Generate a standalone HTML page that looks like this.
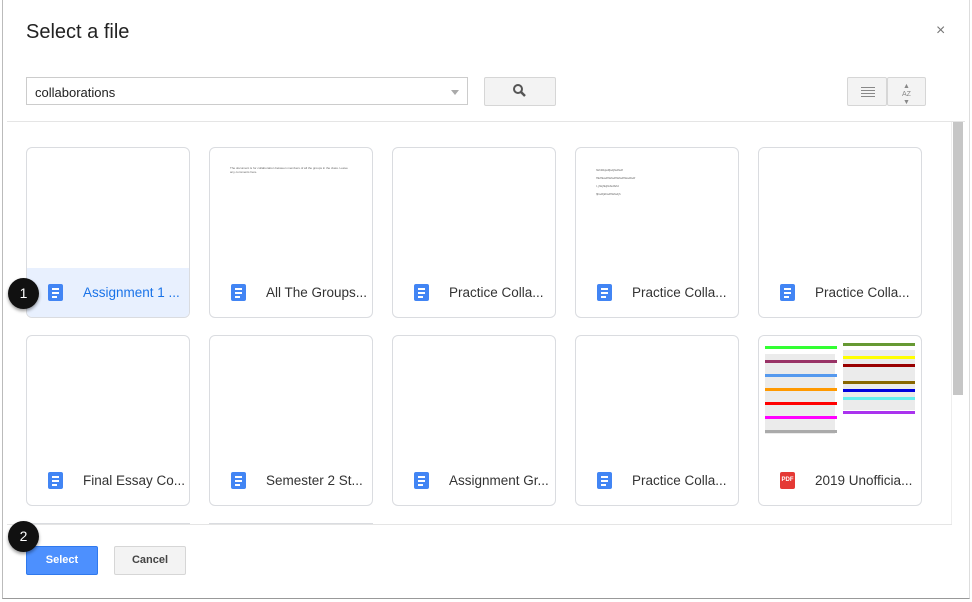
<!DOCTYPE html>
<html style="overflow:hidden;height:602px"><head><style>
body{margin:0;width:972px;height:602px;background:#fff;font-family:"Liberation Sans",Arial,sans-serif;position:relative;overflow:hidden}
.frame{position:absolute;left:2px;top:0;width:968px;height:599px;border-left:1px solid #bbb;border-bottom:1px solid #999;border-right:1px solid #ddd;box-sizing:border-box}
h1{position:absolute;left:26px;top:21px;margin:0;font-size:20px;font-weight:normal;color:#222}
.x{position:absolute;left:936px;top:22px;font-size:16px;color:#777}
.search{position:absolute;left:26px;top:77px;width:442px;height:28px;border:1px solid #ccc;box-sizing:border-box;font-size:13px;padding:7px 8px;color:#222}
.search:after{content:"";position:absolute;right:8px;top:12px;border:4px solid transparent;border-top:5px solid #aaa}
.btn{position:absolute;background:#f3f3f3;border:1px solid #d6d6d6;box-sizing:border-box;border-radius:2px}
.hr{position:absolute;left:7px;top:121px;width:958px;height:1px;background:#e5e5e5}
.sb{position:absolute;left:953px;top:122px;width:10px;height:273px;background:#c6c6c6}
.sbt{position:absolute;left:951px;top:122px;width:1px;height:403px;background:#eee}
.card{position:absolute;width:164px;height:171px;border:1px solid #dadce0;border-radius:6px;box-sizing:border-box;overflow:hidden;background:#fff}
.lab{position:absolute;left:0;right:0;bottom:0;height:49px}
.lab .ic{position:absolute;left:21px;top:16px;width:15px;height:17px;background:#4285f4;border-radius:2px}
.lab .ic i{position:absolute;left:4px;height:2px;background:#fff}
.lab span{position:absolute;left:56px;top:17px;font-size:13.5px;color:#333;white-space:nowrap}
.sel .lab{background:#e8f0fe}.sel .lab span{color:#1a73e8}
.pdf{background:#e53935!important;font-size:6px;color:#fff;font-weight:bold;text-align:center;line-height:17px}
.foot{position:absolute;left:7px;top:524px;width:945px;height:1px;background:#e5e5e5}
.badge{position:absolute;width:31px;height:31px;border-radius:50%;background:#111;color:#fff;font-size:14px;text-align:center;line-height:31px;box-shadow:0 2px 3px rgba(0,0,0,.4)}
.tiny{position:absolute;left:20px;font-size:3px;color:#666;width:120px}
</style></head><body>
<div class="frame"></div>
<h1>Select a file</h1>
<div class="x">×</div>
<div class="search">collaborations</div>
<div class="btn" style="left:484px;top:77px;width:72px;height:29px">
<svg width="72" height="29" style="position:absolute;left:-1px;top:-1px"><circle cx="34" cy="12" r="4" fill="none" stroke="#555" stroke-width="2"/><line x1="37" y1="15" x2="41" y2="19" stroke="#555" stroke-width="2.5"/></svg></div>
<div class="btn" style="left:847px;top:77px;width:40px;height:29px">
<svg width="40" height="29" style="position:absolute;left:0;top:0"><g stroke="#888" stroke-width="1"><line x1="13" y1="9.5" x2="27" y2="9.5"/><line x1="13" y1="12.5" x2="27" y2="12.5"/><line x1="13" y1="15.5" x2="27" y2="15.5"/><line x1="13" y1="18.5" x2="27" y2="18.5"/></g></svg></div>
<div class="btn" style="left:887px;top:77px;width:39px;height:29px;font-size:7px;color:#888;text-align:center;line-height:8px;padding-top:5px">▲<br>AZ<br>▼</div>
<div class="hr"></div>
<div class="sbt"></div><div class="sb"></div>

<div class="card sel" style="left:26px;top:147px"><div class="lab"><div class="ic"><i style="top:4px;width:7px"></i><i style="top:8px;width:7px"></i><i style="top:12px;width:5px"></i></div><span>Assignment 1 ...</span></div></div>
<div class="card" style="left:209px;top:147px"><div class="tiny" style="top:18px">The document is for collaboration between members of all the groups in the class. Leave any comments here.</div><div class="lab"><div class="ic"><i style="top:4px;width:7px"></i><i style="top:8px;width:7px"></i><i style="top:12px;width:5px"></i></div><span>All The Groups...</span></div></div>
<div class="card" style="left:392px;top:147px"><div class="lab"><div class="ic"><i style="top:4px;width:7px"></i><i style="top:8px;width:7px"></i><i style="top:12px;width:5px"></i></div><span>Practice Colla...</span></div></div>
<div class="card" style="left:575px;top:147px"><div class="tiny" style="top:18px;line-height:8px">hkhfdkjsdfjsdjfsdfsdf<br>fhkfhksdfhkfsdfhkfsdfhksdfsdf<br>l,.jhkjhkjhkfsdfsfd<br>fjhsdfjkhsdfhkfsdjh</div><div class="lab"><div class="ic"><i style="top:4px;width:7px"></i><i style="top:8px;width:7px"></i><i style="top:12px;width:5px"></i></div><span>Practice Colla...</span></div></div>
<div class="card" style="left:758px;top:147px"><div class="lab"><div class="ic"><i style="top:4px;width:7px"></i><i style="top:8px;width:7px"></i><i style="top:12px;width:5px"></i></div><span>Practice Colla...</span></div></div>

<div class="card" style="left:26px;top:335px"><div class="lab"><div class="ic"><i style="top:4px;width:7px"></i><i style="top:8px;width:7px"></i><i style="top:12px;width:5px"></i></div><span>Final Essay Co...</span></div></div>
<div class="card" style="left:209px;top:335px"><div class="lab"><div class="ic"><i style="top:4px;width:7px"></i><i style="top:8px;width:7px"></i><i style="top:12px;width:5px"></i></div><span>Semester 2 St...</span></div></div>
<div class="card" style="left:392px;top:335px"><div class="lab"><div class="ic"><i style="top:4px;width:7px"></i><i style="top:8px;width:7px"></i><i style="top:12px;width:5px"></i></div><span>Assignment Gr...</span></div></div>
<div class="card" style="left:575px;top:335px"><div class="lab"><div class="ic"><i style="top:4px;width:7px"></i><i style="top:8px;width:7px"></i><i style="top:12px;width:5px"></i></div><span>Practice Colla...</span></div></div>
<div class="card" style="left:758px;top:335px">
<svg width="164" height="110" style="position:absolute;left:0;top:0">
<g fill="#ddd"><rect x="6" y="18" width="70" height="80" opacity=".6"/><rect x="84" y="14" width="72" height="60" opacity=".6"/></g>
<g height="3"><rect x="6" y="10" width="72" height="3" fill="#3f3"/><rect x="6" y="24" width="72" height="3" fill="#936"/><rect x="6" y="38" width="72" height="3" fill="#59e"/><rect x="6" y="52" width="72" height="3" fill="#f90"/><rect x="6" y="66" width="72" height="3" fill="#f00"/><rect x="6" y="80" width="72" height="3" fill="#f0f"/><rect x="6" y="94" width="72" height="3" fill="#aaa"/>
<rect x="84" y="7" width="72" height="3" fill="#693"/><rect x="84" y="20" width="72" height="3" fill="#ff0"/><rect x="84" y="28" width="72" height="3" fill="#900"/><rect x="84" y="45" width="72" height="3" fill="#860"/><rect x="84" y="53" width="72" height="3" fill="#00d"/><rect x="84" y="61" width="72" height="3" fill="#6ee"/><rect x="84" y="75" width="72" height="3" fill="#a3e"/></g>
</svg>
<div class="lab"><div class="ic pdf">PDF</div><span>2019 Unofficia...</span></div></div>

<div style="position:absolute;left:26px;top:523px;width:164px;height:1px;background:#dadce0"></div>
<div style="position:absolute;left:209px;top:523px;width:164px;height:1px;background:#dadce0"></div>
<div class="foot"></div>
<div style="position:absolute;left:26px;top:546px;width:72px;height:29px;background:#4d90fe;border:1px solid #3079ed;box-sizing:border-box;border-radius:2px;color:#fff;font-size:11px;font-weight:bold;text-align:center;line-height:27px">Select</div>
<div class="btn" style="left:114px;top:546px;width:72px;height:29px;font-size:11px;font-weight:bold;color:#444;text-align:center;line-height:27px">Cancel</div>
<div class="badge" style="left:8px;top:278px">1</div>
<div class="badge" style="left:8px;top:521px">2</div>
</body></html>
